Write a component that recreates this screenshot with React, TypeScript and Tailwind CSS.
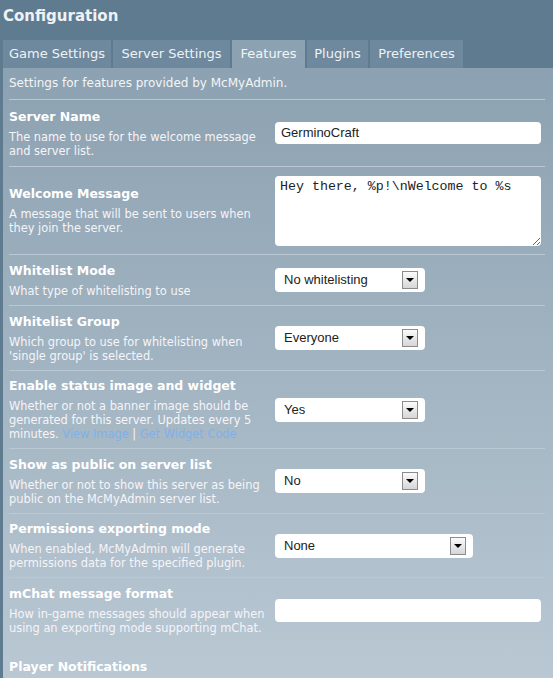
import React from "react";

function Arrow() {
  return (
    <span className="mr-[7px] flex h-[18px] w-[16px] items-center justify-center border border-[#8c8c8c] bg-gradient-to-b from-[#fbfbfb] to-[#d6d6d6]">
      <span className="h-0 w-0 border-l-[4px] border-r-[4px] border-t-[4px] border-l-transparent border-r-transparent border-t-black" />
    </span>
  );
}

function Select({ value, w }: { value: string; w: string }) {
  return (
    <div
      className={`flex h-[24px] ${w} items-center justify-between rounded-[4px] bg-white pl-[9px] font-['Liberation_Sans',Arial,sans-serif] text-[13px] text-[#222]`}
    >
      <span>{value}</span>
      <Arrow />
    </div>
  );
}

function Row({
  h,
  title,
  children,
  control,
}: {
  h: string;
  title: string;
  children: React.ReactNode;
  control: React.ReactNode;
}) {
  return (
    <div className={`grid ${h} grid-cols-[266px_1fr] items-center border-t border-[#b9c8d3]`}>
      <div className="flex flex-col gap-[5px]">
        <div className="text-[12.5px] font-bold leading-[16px] text-white">{title}</div>
        <div className="text-[11.4px] leading-[14px] text-[#f6f4f8]">{children}</div>
      </div>
      <div>{control}</div>
    </div>
  );
}

export default function App() {
  const tabs = [
    { label: "Game Settings", w: "w-[108px]", active: false },
    { label: "Server Settings", w: "w-[117px]", active: false },
    { label: "Features", w: "w-[73px]", active: true },
    { label: "Plugins", w: "w-[61px]", active: false },
    { label: "Preferences", w: "w-[93px]", active: false },
  ];
  return (
    <div className="h-[678px] w-[553px] overflow-hidden bg-[#5f7b90] pl-[3px] font-['DejaVu_Sans',Verdana,sans-serif]">
      <div className="flex h-[40px] items-start pt-[4px] text-[15px] font-bold leading-[24px] text-[#eef2f5]">
        Configuration
      </div>
      <div className="flex h-[28px] gap-[2px]">
        {tabs.map((t) => (
          <div
            key={t.label}
            className={`flex h-full ${t.w} items-center justify-center text-[13px] ${
              t.active ? "bg-[#8ca2b2] text-[#f3f6f8]" : "bg-[#6e899d] text-[#eef2f5]"
            }`}
          >
            {t.label}
          </div>
        ))}
      </div>
      <div className="h-[610px] bg-gradient-to-b from-[#8ca1b1] to-[#b9c8d3] pl-[6px] pr-[8px]">
        <div className="flex h-[31px] items-center pb-[1px] text-[12px] text-[#f3f5f7]">
          Settings for features provided by McMyAdmin.
        </div>
        <Row
          h="h-[67px]"
          title="Server Name"
          control={
            <div className="flex h-[22px] w-[266px] items-center rounded-[4px] bg-white pl-[6px] font-['Liberation_Sans',Arial,sans-serif] text-[13px] text-[#222]">
              GerminoCraft
            </div>
          }
        >
          The name to use for the welcome message
          <br />
          and server list.
        </Row>
        <Row
          h="h-[88px]"
          title="Welcome Message"
          control={
            <textarea
              readOnly
              defaultValue={"Hey there, %p!\\nWelcome to %s"}
              className="block h-[70px] w-[266px] rounded-[4px] bg-white px-[5px] pt-[3px] font-['Liberation_Mono','Courier_New',monospace] text-[13.3px] leading-[16px] text-[#222] outline-none"
            />
          }
        >
          A message that will be sent to users when
          <br />
          they join the server.
        </Row>
        <Row
          h="h-[51px]"
          title="Whitelist Mode"
          control={<Select value="No whitelisting" w="w-[150px]" />}
        >
          What type of whitelisting to use
        </Row>
        <Row h="h-[65px]" title="Whitelist Group" control={<Select value="Everyone" w="w-[150px]" />}>
          Which group to use for whitelisting when
          <br />
          'single group' is selected.
        </Row>
        <Row
          h="h-[78px]"
          title="Enable status image and widget"
          control={<Select value="Yes" w="w-[150px]" />}
        >
          Whether or not a banner image should be
          <br />
          generated for this server. Updates every 5
          <br />
          minutes. <span className="text-[#7fb0ea]">View Image</span> |{" "}
          <span className="text-[#7fb0ea]">Get Widget Code</span>
        </Row>
        <Row h="h-[65px]" title="Show as public on server list" control={<Select value="No" w="w-[150px]" />}>
          Whether or not to show this server as being
          <br />
          public on the McMyAdmin server list.
        </Row>
        <Row h="h-[64px]" title="Permissions exporting mode" control={<Select value="None" w="w-[198px]" />}>
          When enabled, McMyAdmin will generate
          <br />
          permissions data for the specified plugin.
        </Row>
        <Row
          h="h-[65px]"
          title="mChat message format"
          control={<div className="h-[23px] w-[266px] rounded-[4px] bg-white" />}
        >
          How in-game messages should appear when
          <br />
          using an exporting mode supporting mChat.
        </Row>
        <div className="pt-[17px] text-[12.5px] font-bold leading-[16px] text-white">Player Notifications</div>
      </div>
    </div>
  );
}
